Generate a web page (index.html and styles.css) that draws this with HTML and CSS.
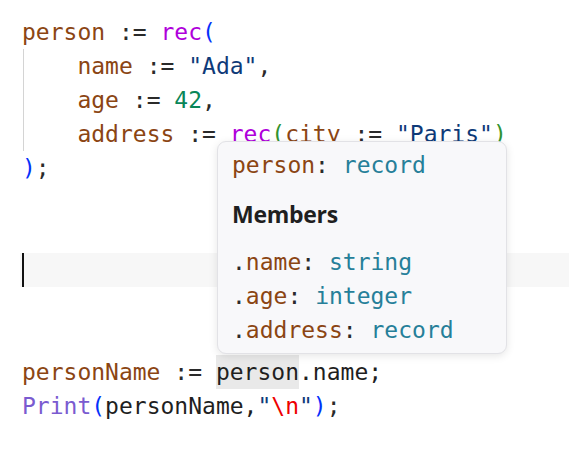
FILE: index.html
```html
<!DOCTYPE html>
<html>
<head>
<meta charset="utf-8">
<link rel="stylesheet" href="styles.css">
</head>
<body>
<div class="editor">
  <div class="line"><span class="decl">person</span> <span class="op">:=</span> <span class="kw">rec</span><span class="b1">(</span></div>
  <div class="guide">
    <div class="line">    <span class="decl">name</span> <span class="op">:=</span> <span class="str">"Ada"</span><span class="op">,</span></div>
    <div class="line">    <span class="decl">age</span> <span class="op">:=</span> <span class="num">42</span><span class="op">,</span></div>
    <div class="line">    <span class="decl">address</span> <span class="op">:=</span> <span class="kw">rec</span><span class="b2">(</span><span class="decl">city</span> <span class="op">:=</span> <span class="str">"Paris"</span><span class="b2">)</span></div>
  </div>
  <div class="line"><span class="b1">)</span><span class="op">;</span></div>
  <div class="line"></div>
  <div class="line"></div>
  <div class="line current"><span class="cursor"></span></div>
  <div class="line"></div>
  <div class="line"></div>
  <div class="line"><span class="decl">personName</span> <span class="op">:=</span> <span class="hl">person</span><span class="ref">.name;</span></div>
  <div class="line"><span class="fn">Print</span><span class="b1">(</span><span class="ref">personName,</span><span class="str">"</span><span class="esc">\n</span><span class="str">"</span><span class="b1">)</span><span class="op">;</span></div>

  <div class="hover">
    <div class="hrow"><span class="decl">person</span><span class="op">:</span> <span class="type">record</span></div>
    <div class="htitle">Members</div>
    <div class="hlist">
      <div class="hrow"><span class="op">.</span><span class="decl">name</span><span class="op">:</span> <span class="type">string</span></div>
      <div class="hrow"><span class="op">.</span><span class="decl">age</span><span class="op">:</span> <span class="type">integer</span></div>
      <div class="hrow"><span class="op">.</span><span class="decl">address</span><span class="op">:</span> <span class="type">record</span></div>
    </div>
  </div>
</div>
</body>
</html>
```
FILE: styles.css
```css
html, body {
  margin: 0;
  padding: 0;
  background: #ffffff;
}
body {
  width: 569px;
  height: 453px;
  overflow: hidden;
}
.editor {
  position: relative;
  padding: 15px 0 0 22px;
  font-family: "DejaVu Sans Mono", "Liberation Mono", monospace;
  font-size: 23px;
  color: #1f1f1f;
}
.line {
  height: 34px;
  line-height: 34px;
  white-space: pre;
}
.guide {
  background: linear-gradient(#d4d4d4, #d4d4d4) 1px 0 / 1px 100% no-repeat;
}
.current {
  margin-left: -2px;
  padding-left: 2px;
  background: #f7f7f7;
}
.cursor {
  display: inline-block;
  width: 2px;
  height: 34px;
  vertical-align: top;
  background: #111111;
}
.decl { color: #8b4513; }
.op { color: #2a2a2a; }
.kw { color: #af00db; }
.b1 { color: #0431fa; }
.b2 { color: #319331; }
.str { color: #0e3a78; }
.num { color: #098658; }
.fn { color: #7a5bd0; }
.esc { color: #ee0000; }
.ref { color: #1f1f1f; }
.type { color: #267f99; }
.hl {
  display: inline-block;
  line-height: 34px;
  background: #e9e9e9;
  color: #1f1f1f;
}
.hover {
  position: absolute;
  left: 217px;
  top: 141px;
  width: 290px;
  height: 213px;
  box-sizing: border-box;
  padding: 6px 14px 6px 14px;
  background: #f8f8fa;
  border: 1px solid #e2e2e6;
  border-radius: 9px;
  box-shadow: 0 2px 8px rgba(0, 0, 0, 0.10);
}
.hrow {
  height: 34px;
  line-height: 34px;
  white-space: pre;
}
.htitle {
  margin-top: 15px;
  height: 34px;
  line-height: 34px;
  font-family: "Open Sans", "Noto Sans", sans-serif;
  font-weight: 700;
  font-size: 23px;
  letter-spacing: -0.3px;
  color: #1f1f1f;
}
.hlist {
  margin-top: 14px;
}
```
